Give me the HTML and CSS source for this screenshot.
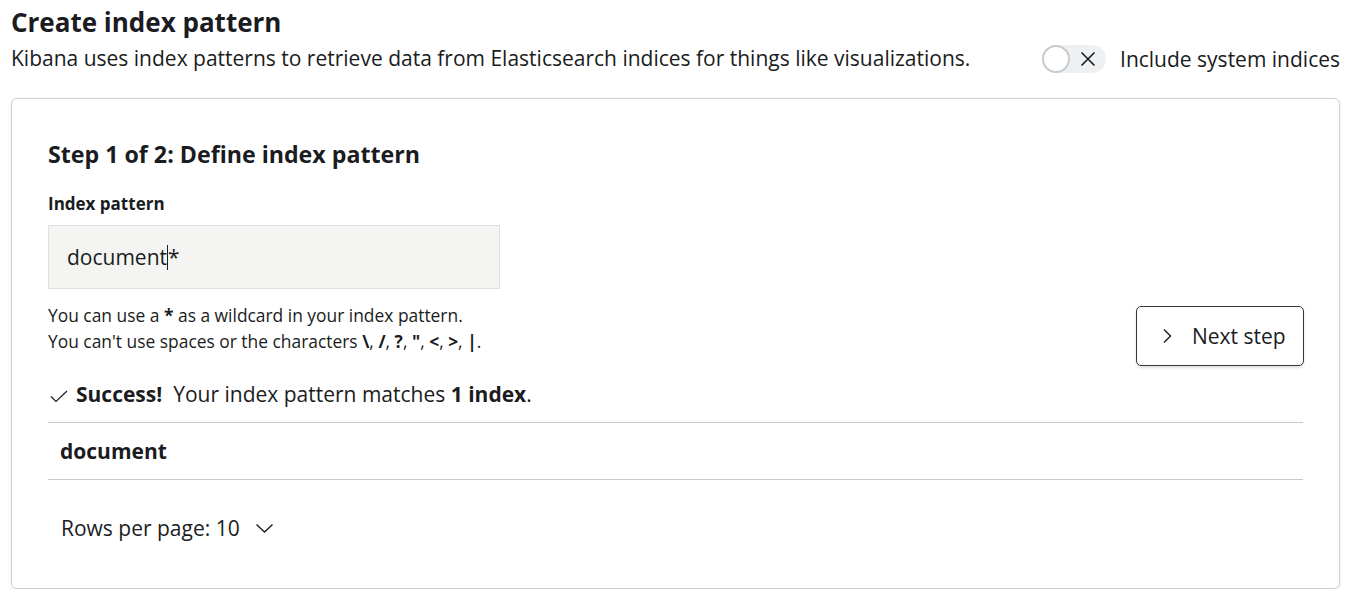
FILE: index.html
```html
<!DOCTYPE html>
<html>
<head>
<meta charset="utf-8">
<link rel="stylesheet" href="styles.css">
</head>
<body>
<div class="page">
  <div class="header">
    <div class="header-text">
      <h1 class="title">Create index pattern</h1>
      <p class="subtitle">Kibana uses index patterns to retrieve data from Elasticsearch indices for things like visualizations.</p>
    </div>
    <div class="switch-wrap">
      <span class="switch">
        <span class="knob"></span>
        <svg class="switch-x" width="18" height="18" viewBox="0 0 18 18"><path d="M2.5 2.5L15.5 15.5M15.5 2.5L2.5 15.5" stroke="#1a1c21" stroke-width="1.6" fill="none"/></svg>
      </span>
      <span class="switch-label">Include system indices</span>
    </div>
  </div>

  <div class="panel">
    <h2 class="step-title">Step 1 of 2: Define index pattern</h2>
    <div class="form-row">
      <div class="field">
        <label class="field-label">Index pattern</label>
        <div class="input">document<span class="caret"></span>*</div>
        <div class="help">
          <div>You can use a <b>*</b> as a wildcard in your index pattern.</div>
          <div>You can't use spaces or the characters <b>\</b>, <b>/</b>, <b>?</b>, <b>"</b>, <b>&lt;</b>, <b>&gt;</b>, <b>|</b>.</div>
        </div>
      </div>
      <button class="next-btn">
        <svg width="16" height="18" viewBox="0 0 16 18"><path d="M5 2.5L11.5 9L5 15.5" stroke="#1a1c21" stroke-width="1.4" fill="none"/></svg>
        <span>Next step</span>
      </button>
    </div>

    <div class="success">
      <svg width="22" height="16" viewBox="0 0 22 16"><path d="M3 8.5L8 13.5L19 3" stroke="#1a1c21" stroke-width="1.2" fill="none"/></svg>
      <span><b>Success!</b>&nbsp; Your index pattern matches <b>1 index</b>.</span>
    </div>

    <div class="table">
      <div class="row">document</div>
    </div>

    <div class="pager">
      <span>Rows per page: 10</span>
      <svg width="19" height="12" viewBox="0 0 19 12"><path d="M1.5 2.5L9.5 10L17.5 2.5" stroke="#1a1c21" stroke-width="1.4" fill="none"/></svg>
    </div>
  </div>
</div>
</body>
</html>
```

FILE: styles.css
```css
* { box-sizing: border-box; }
body {
  margin: 0;
  font-family: "Open Sans", "Noto Sans", sans-serif;
  color: #1a1c21;
  background: #fff;
}
.page {
  padding: 4px 14px 0 11px;
}
.header {
  display: flex;
  justify-content: space-between;
  align-items: flex-end;
}
.title {
  margin: 0;
  font-size: 26px;
  font-weight: 700;
  line-height: 36px;
  color: #1a1c21;
}
.subtitle {
  margin: 0;
  font-size: 21px;
  line-height: 36px;
  color: #1a1c21;
}
.switch-wrap {
  display: flex;
  align-items: center;
  gap: 14px;
  margin-bottom: 2px;
}
.switch {
  position: relative;
  width: 64px;
  height: 28px;
  border-radius: 14px;
  background: #eef0f1;
  display: flex;
  align-items: center;
  justify-content: flex-end;
  padding-right: 9px;
}
.knob {
  position: absolute;
  left: 0;
  top: 0;
  width: 28px;
  height: 28px;
  border-radius: 50%;
  background: #fff;
  border: 2px solid #c5ccd0;
}
.switch-x { display: block; }
.switch-label {
  font-size: 21px;
  line-height: 30px;
}
.panel {
  margin-top: 22px;
  border: 1px solid #c9d1d5;
  border-radius: 6px;
  box-shadow: 0 1px 3px rgba(120, 130, 140, 0.18);
  padding: 39px 36px 32px 36px;
  height: 491px;
}
.step-title {
  margin: 0;
  font-size: 23.2px;
  font-weight: 700;
  line-height: 32px;
}
.form-row {
  display: flex;
  justify-content: space-between;
  align-items: flex-end;
  margin-top: 22px;
}
.field-label {
  display: block;
  font-size: 17px;
  font-weight: 700;
  line-height: 24px;
}
.input {
  margin-top: 9px;
  width: 452px;
  height: 64px;
  background: #f4f5f2;
  border: 1px solid #dde1df;
  padding-left: 18px;
  font-size: 21px;
  line-height: 62px;
  color: #1a1c21;
}
.caret {
  display: inline-block;
  width: 1px;
  height: 25px;
  background: #1a1c21;
  vertical-align: -5px;
}
.help {
  margin-top: 13px;
  font-size: 17.4px;
  line-height: 26px;
}
.help b { font-weight: 700; }
.next-btn {
  display: flex;
  align-items: center;
  gap: 17px;
  width: 168px;
  height: 60px;
  margin-bottom: -12px;
  margin-right: -1px;
  background: #fff;
  border: 1px solid #343741;
  border-radius: 5px;
  padding: 0 0 0 22px;
  font-family: inherit;
  font-size: 21px;
  color: #1a1c21;
  box-shadow: 0 2px 3px rgba(0,0,0,0.12);
}
.success {
  display: flex;
  align-items: center;
  gap: 6px;
  margin-top: 25px;
  font-size: 21px;
  line-height: 30px;
}
.success svg { margin-top: 4px; }
.table {
  margin-top: 13px;
  border-top: 1px solid #c3cbcf;
  border-bottom: 1px solid #c3cbcf;
}
.row {
  height: 56px;
  padding-left: 12px;
  font-size: 21px;
  font-weight: 700;
  line-height: 56px;
}
.pager {
  display: flex;
  align-items: center;
  gap: 15px;
  margin-top: 33px;
  padding-left: 13px;
  font-size: 21px;
  line-height: 30px;
}
```
